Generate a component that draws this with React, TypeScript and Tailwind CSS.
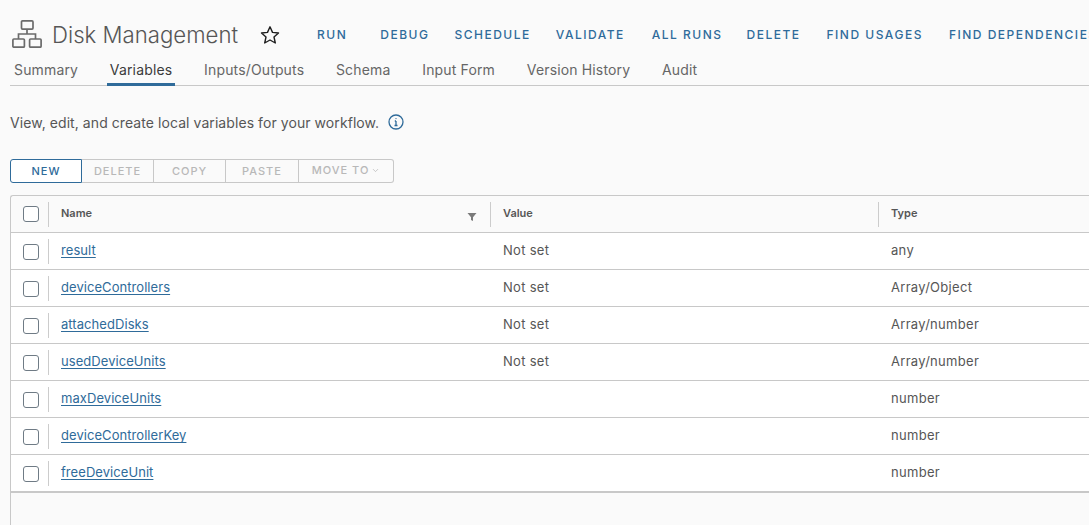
import React from 'react'
import { ChevronDown } from 'lucide-react'

const actions = [
  { label: 'RUN', cls: 'ml-[37px] mr-[8px]' },
  { label: 'DEBUG', cls: '' },
  { label: 'SCHEDULE', cls: '' },
  { label: 'VALIDATE', cls: '' },
  { label: 'ALL RUNS', cls: 'ml-[2px]' },
  { label: 'DELETE', cls: '-ml-[1px]' },
  { label: 'FIND USAGES', cls: 'ml-[1px]' },
  { label: 'FIND DEPENDENCIES', cls: 'ml-[1px]' },
]

const tabs = ['Summary', 'Variables', 'Inputs/Outputs', 'Schema', 'Input Form', 'Version History', 'Audit']

const rows = [
  { name: 'result', value: 'Not set', type: 'any' },
  { name: 'deviceControllers', value: 'Not set', type: 'Array/Object' },
  { name: 'attachedDisks', value: 'Not set', type: 'Array/number' },
  { name: 'usedDeviceUnits', value: 'Not set', type: 'Array/number' },
  { name: 'maxDeviceUnits', value: '', type: 'number' },
  { name: 'deviceControllerKey', value: '', type: 'number' },
  { name: 'freeDeviceUnit', value: '', type: 'number' },
]

const WorkflowIcon = () => (
  <svg className="shrink-0" width="30" height="28" viewBox="0 0 30 28" fill="none" stroke="#6b6b6b" strokeWidth="1.7">
    <rect x="9.5" y="0.9" width="11.5" height="8.2" rx="1" />
    <rect x="0.9" y="19" width="11.5" height="8.2" rx="1" />
    <rect x="17.6" y="19" width="11.5" height="8.2" rx="1" />
    <path d="M15 9v5M6.5 19v-5h17v5" />
  </svg>
)

const Star = () => (
  <svg width="20" height="20" viewBox="0 0 20 20" fill="none" stroke="#1f1f1f" strokeWidth="1.4" strokeLinejoin="round">
    <path d="M10 1.8l2.5 5.6 6 .6-4.5 4 1.3 6L10 15l-5.3 3 1.3-6-4.5-4 6-.6z" />
  </svg>
)

const InfoIcon = () => (
  <svg width="16" height="16" viewBox="0 0 16 16" fill="none" stroke="#2f6b9a" strokeWidth="1.3">
    <circle cx="8" cy="8" r="7" />
    <path d="M8 7v4.5M6.5 11.5h3M6.8 7h1.2" />
    <circle cx="8" cy="4.6" r="0.7" fill="#2f6b9a" stroke="none" />
  </svg>
)

const Filter = () => (
  <svg width="10" height="10" viewBox="0 0 10 10" fill="#7a7a7a">
    <path d="M0.5 1h9L6 5.2V9L4 8V5.2z" />
  </svg>
)

const Check = () => <span className="block w-[16px] h-[16px] rounded-[3px] border border-[#6f7b85] bg-white" />

const Sep = () => <span className="block w-px h-[25px] bg-[#cccccc]" />

const GRID = 'grid grid-cols-[38px_442px_388px_1fr] items-center'

export default function App() {
  return (
    <div
      className="w-[1089px] h-[525px] overflow-hidden bg-[#fafafa] text-[#565656]"
      style={{ fontFamily: 'Inter, "Open Sans", sans-serif' }}
    >
      {/* title + actions */}
      <div className="flex items-center h-[56px] pt-[11px] pl-[12px] whitespace-nowrap">
        <WorkflowIcon />
        <h1 className="shrink-0 ml-[10px] mt-[2px] text-[22.2px] font-light text-[#565656]">Disk Management</h1>
        <span className="shrink-0 ml-[22px] mt-[3px]"><Star /></span>
        <div className="flex shrink-0 gap-[25px] mt-[2px]">
          {actions.map((a) => (
            <span key={a.label} className={`text-[12px] font-medium tracking-[1.5px] text-[#2f6b9a] ${a.cls}`}>
              {a.label}
            </span>
          ))}
        </div>
      </div>

      {/* tabs */}
      <div className="flex pl-[1px] ml-[10px] h-[30px] border-b border-[#c8c8c8]">
        {tabs.map((t) => (
          <div
            key={t}
            className={`h-[30px] px-[3px] mr-[25.8px] flex items-center text-[14px] tracking-[0.15px] ${
              t === 'Variables' ? 'border-b-[3px] border-[#2f6b9a] text-[#3b3b3b] pb-[1px]' : 'text-[#666666] pb-[4px]'
            }`}
          >
            {t}
          </div>
        ))}
      </div>

      {/* description */}
      <div className="flex items-center gap-[9px] ml-[10px] mt-[26px] h-[20px] text-[14px] tracking-[0.07px] text-[#565656]">
        View, edit, and create local variables for your workflow.
        <InfoIcon />
      </div>

      {/* toolbar */}
      <div className="flex ml-[10px] mt-[27px] h-[24px] w-[384px] text-[11px] font-medium tracking-[1px] text-[#b8b8b8]">
        <button className="w-[72px] rounded-l-[3px] border border-[#2f6b9a] text-[#2f6b9a] bg-white">NEW</button>
        <button className="w-[72px] border-y border-r border-[#c8c8c8]">DELETE</button>
        <button className="w-[72px] border-y border-r border-[#c8c8c8]">COPY</button>
        <button className="w-[73px] border-y border-r border-[#c8c8c8]">PASTE</button>
        <button className="w-[95px] flex items-center justify-center gap-[2px] rounded-r-[3px] border-y border-r border-[#c8c8c8] pb-[2px]">
          MOVE TO <ChevronDown size={9} />
        </button>
      </div>

      {/* table */}
      <div className="ml-[10px] mt-[12px] h-[400px] border-l border-t border-[#c8c8c8] rounded-tl-[3px]">
        <div className={`${GRID} h-[37px] border-b border-[#c8c8c8] text-[11px] font-semibold text-[#565656]`}>
          <div className="flex items-center justify-between pl-[12px]"><Check /><Sep /></div>
          <div className="flex items-center h-full pl-[12px]">
            <span className="mb-[2px]">Name</span>
            <span className="ml-auto mr-[13px] mt-[5px]"><Filter /></span>
            <Sep />
          </div>
          <div className="flex items-center h-full pl-[12px]">
            <span className="mb-[2px]">Value</span>
            <span className="ml-auto"><Sep /></span>
          </div>
          <div className="pl-[12px] mb-[2px]">Type</div>
        </div>
        {rows.map((r, i) => (
          <div
            key={r.name}
            className={`${GRID} bg-white text-[13px] tracking-[0.3px] text-[#565656] ${
              i === rows.length - 1 ? 'h-[38px] border-b-2 border-[#c8c8c8]' : 'h-[37px] border-b border-[#c8c8c8]'
            }`}
          >
            <div className="flex items-center justify-between pl-[12px]">
              <span className="mt-[1px]"><Check /></span>
              <Sep />
            </div>
            <div className="pl-[12px]">
              <a className="text-[#2f6b9a] tracking-[0.06px] underline underline-offset-2">{r.name}</a>
            </div>
            <div className="pl-[12px]">{r.value}</div>
            <div className="pl-[12px]">{r.type}</div>
          </div>
        ))}
      </div>
    </div>
  )
}
